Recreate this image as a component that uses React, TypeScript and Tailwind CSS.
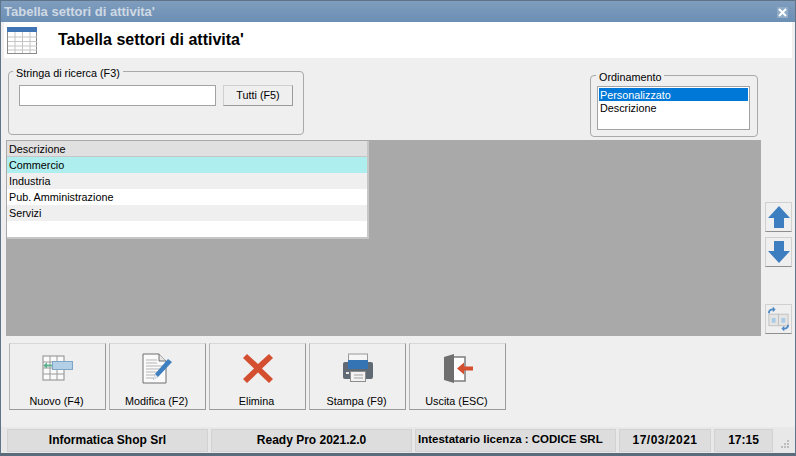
const ui = "font-['Liberation_Sans',Arial,sans-serif]";

const rows = [
  { label: "Commercio", cls: "bg-[#aeeeee]" },
  { label: "Industria", cls: "bg-[#efefef]" },
  { label: "Pub. Amministrazione", cls: "bg-white" },
  { label: "Servizi", cls: "bg-[#efefef]" },
  { label: "", cls: "bg-white" },
];

function TableIcon() {
  return (
    <svg width="31" height="27" viewBox="0 0 31 27">
      <rect x="0.500" y="0.500" width="29" height="26" fill="#fff" stroke="#8a8a8a" />
      <rect x="0" y="0" width="30" height="5" fill="#3f74b5" />
      <path d="M1 10h29M1 14.500h29M1 19h29M1 23h29M8 5v21M15.500 5v21M23 5v21" stroke="#c4c4c4" fill="none" />
    </svg>
  );
}

function NuovoIcon() {
  return (
    <svg width="32" height="26" viewBox="0 0 32 26">
      <rect x="1" y="1" width="21" height="24" fill="#fafafa" stroke="#8b8b8b" />
      <path d="M1 7h21M1 13h21M1 19h21M8 1v24M15 1v24" stroke="#9a9a9a" fill="none" />
      <rect x="10.500" y="6.500" width="20" height="8" fill="#b3d0e6" stroke="#7da6c8" />
      <path d="M1 10.500l4-3v2h5v2H5v2z" fill="#5db08d" />
    </svg>
  );
}

function ModificaIcon() {
  return (
    <svg width="32" height="31" viewBox="0 0 32 31">
      <path d="M1 1h16l7 7v22H1z" fill="#fafafa" stroke="#6f6f6f" />
      <path d="M17 1v7h7" fill="#e4e4e4" stroke="#6f6f6f" />
      <path d="M4 7h11M4 10h11M4 13h17M4 16h17M4 19h13M4 22h10M4 25h8" stroke="#b5b5b5" fill="none" />
      <path d="M11 27l2-6 13-15 4 3-14 15z" fill="#3e7fc0" />
      <path d="M11 27l2-6 3 3z" fill="#e8e8e8" />
    </svg>
  );
}

function EliminaIcon() {
  return (
    <svg width="32" height="31" viewBox="0 0 32 31">
      <path d="M5 1l11 10L27 1l4 4-11 10.500L31 26l-4 4-11-10.500L5 30l-4-4 11-10.500L1 5z" fill="#d34f30" />
    </svg>
  );
}

function StampaIcon() {
  return (
    <svg width="32" height="30" viewBox="0 0 32 30">
      <rect x="6.500" y="1" width="19" height="10" fill="#f5f5f5" stroke="#9a9a9a" />
      <path d="M3 9h26a2 2 0 0 1 2 2v13a2 2 0 0 1-2 2H3a2 2 0 0 1-2-2V11a2 2 0 0 1 2-2z" fill="#5f6a74" />
      <rect x="6" y="7" width="20" height="9" fill="#3473b4" />
      <rect x="4" y="19" width="3" height="2" fill="#e6e6e6" />
      <rect x="8.500" y="18.500" width="15" height="10" fill="#f2f2f2" stroke="#8d8d8d" />
      <path d="M12 22h9M12 25h9" stroke="#a0a0a0" />
    </svg>
  );
}

function UscitaIcon() {
  return (
    <svg width="30" height="31" viewBox="0 0 30 31">
      <path d="M9 4h13v24H9" fill="#fff" stroke="#7d7d7d" strokeWidth="1.500" />
      <path d="M1 4l10-3v29L1 27z" fill="#6f6f6f" />
      <path d="M14 15.500l7-6v4h9v4h-9v4z" fill="#d34f30" />
    </svg>
  );
}

function ArrowUp() {
  return (
    <svg width="24" height="24" viewBox="0 0 24 24">
      <path d="M12 1l11 12h-6v10H7V13H1z" fill="#3d7ec1" />
    </svg>
  );
}

function ArrowDown() {
  return (
    <svg width="24" height="24" viewBox="0 0 24 24">
      <path d="M12 23L1 11h6V1h10v10h6z" fill="#3d7ec1" />
    </svg>
  );
}

function SwapIcon() {
  return (
    <svg width="26" height="26" viewBox="0 0 26 26">
      <rect x="3" y="8" width="10" height="12" fill="#e4e4e4" stroke="#c2c2c2" />
      <rect x="13" y="8" width="10" height="12" fill="#e4e4e4" stroke="#c2c2c2" />
      <path d="M6 12h4v5H6zM16 12h4v5h-4z" fill="#a9cbe6" />
      <path d="M2 7c0-3 2-5 5-5V0l3 3-3 3V4C5 4 4 5 4 7z" fill="#4f8ac4" />
      <path d="M24 19c0 3-2 5-5 5v2l-3-3 3-3v2c2 0 3-1 3-3z" fill="#4f8ac4" />
    </svg>
  );
}

const actions = [
  { label: "Nuovo (F4)", icon: <NuovoIcon /> },
  { label: "Modifica (F2)", icon: <ModificaIcon /> },
  { label: "Elimina", icon: <EliminaIcon /> },
  { label: "Stampa (F9)", icon: <StampaIcon /> },
  { label: "Uscita (ESC)", icon: <UscitaIcon /> },
];

const sideButtons = [
  { icon: <ArrowUp />, cls: "mt-[62px]" },
  { icon: <ArrowDown />, cls: "mt-[5px]" },
  { icon: <SwapIcon />, cls: "mt-[37px]" },
];

const statusCells = [
  { text: "Informatica Shop Srl", w: "w-[201px]", cls: "justify-center text-[12px]" },
  { text: "Ready Pro 2021.2.0", w: "w-[201px]", cls: "justify-center text-[12px]" },
  { text: "Intestatario licenza : CODICE SRL", w: "w-[201px]", cls: "pl-[2px] text-[11.500px]" },
  { text: "17/03/2021", w: "w-[92px]", cls: "justify-center text-[12px] tracking-[0.500px]" },
  { text: "17:15", w: "w-[59px]", cls: "justify-center text-[12px]" },
];

export default function App() {
  return (
    <div className={`${ui} flex h-[456px] w-[796px] flex-col overflow-hidden border border-b-[3px] border-[#5f7488] border-b-[#5a6b7c] bg-[#efefef] text-[10.800px] text-black`}>
      {/* Title bar */}
      <div className="flex h-[21px] shrink-0 items-center justify-between bg-gradient-to-b from-[#7f9dbd] to-[#6c8fb5] pl-[3px] pr-[7px] pt-[1px]">
        <span className="text-[13px] font-bold text-[#cfd9e4]">Tabella settori di attivita'</span>
        <span className="flex h-[11px] w-[11px] items-center justify-center bg-[#8fabc8]">
          <svg width="9" height="9" viewBox="0 0 9 9">
            <path d="M1 1l7 7M8 1L1 8" stroke="#fff" strokeWidth="2" />
          </svg>
        </span>
      </div>

      {/* Header */}
      <div className="mx-[3px] flex h-[36px] shrink-0 items-center gap-[20px] bg-white pl-[3px]">
        <TableIcon />
        <h1 className="text-[16px] font-bold">Tabella settori di attivita'</h1>
      </div>

      {/* Filters */}
      <div className="flex h-[82px] shrink-0 justify-between pl-[7px] pr-[37px]">
        <div className="relative mt-[13px] h-[64px] w-[296px] rounded-[4px] border border-[#a9a9a9]">
          <span className="absolute left-[4px] top-[-5px] bg-[#efefef] px-[3px] leading-[13px]">Stringa di ricerca (F3)</span>
          <div className="ml-[10px] mt-[13px] flex gap-[7px]">
            <div className="h-[21px] w-[197px] border border-[#a3a3a3] bg-white" />
            <div className="flex h-[21px] w-[70px] items-center justify-center border border-[#d0d0d0] border-b-[#9a9a9a] border-r-[#9a9a9a] bg-[#efefef]">Tutti (F5)</div>
          </div>
        </div>
        <div className="relative mt-[17px] h-[62px] w-[168px] rounded-[4px] border border-[#a9a9a9]">
          <span className="absolute left-[5px] top-[-5px] bg-[#efefef] px-[3px] leading-[13px]">Ordinamento</span>
          <div className="ml-[6px] mt-[10px] h-[44px] w-[153px] border border-[#a3a3a3] bg-white p-[1px]">
            <div className="flex h-[13px] items-center bg-[#0078d7] pl-[1px] pt-[1px] text-white">Personalizzato</div>
            <div className="flex h-[13px] items-center pl-[1px] pt-[1px]">Descrizione</div>
          </div>
        </div>
      </div>

      {/* Grid + side buttons */}
      <div className="flex h-[196px] shrink-0 pl-[5px]">
        <div className="h-[196px] w-[755px] bg-[#a9a9a9] pl-[1px] pt-[1px]">
          <div className="w-[362px] border-r-[2px] border-b-[2px] border-[#c6c6c6]">
            <div className="flex h-[16px] items-center border-b border-[#c6c6c6] bg-[#e0e0e0] pl-[2px] pt-[1px]">Descrizione</div>
            {rows.map((row) => (
              <div key={row.label} className={`flex h-[16px] items-center pl-[2px] pt-[1px] ${row.cls}`}>{row.label}</div>
            ))}
          </div>
        </div>
        <div className="ml-[4px] flex w-[27px] flex-col">
          {sideButtons.map((b, i) => (
            <div key={i} className={`flex h-[30px] w-[27px] items-center justify-center border border-[#d0d0d0] border-b-[#8f8f8f] ${b.cls}`}>
              {b.icon}
            </div>
          ))}
        </div>
      </div>

      {/* Action buttons */}
      <div className="mt-[7px] flex h-[67px] shrink-0 gap-[3px] pl-[8px]">
        {actions.map((a) => (
          <div key={a.label} className="flex w-[97px] flex-col items-center border border-[#d0d0d0] border-b-[#9a9a9a] border-r-[#9a9a9a] border-l-[#b5b5b5] border-t-[#d8d8d8]">
            <div className="flex h-[44px] items-center justify-center pt-[6px]">{a.icon}</div>
            <div className="mr-[2px] mt-[6px]">{a.label}</div>
          </div>
        ))}
      </div>

      {/* Status bar */}
      <div className="mt-auto flex h-[26px] shrink-0 items-center gap-[3px] bg-[#e8e8e8] pl-[6px]">
        {statusCells.map((c) => (
          <div key={c.text} className={`flex h-[23px] items-center border border-[#d2d2d2] bg-[#dddddd] font-bold ${c.w} ${c.cls}`}>
            {c.text}
          </div>
        ))}
        <svg className="ml-[5px] mt-[8px]" width="9" height="9" viewBox="0 0 9 9">
          <path d="M6 0h2v2H6zM3 3h2v2H3zM6 3h2v2H6zM0 6h2v2H0zM3 6h2v2H3zM6 6h2v2H6z" fill="#bdbdbd" />
        </svg>
      </div>
    </div>
  );
}
